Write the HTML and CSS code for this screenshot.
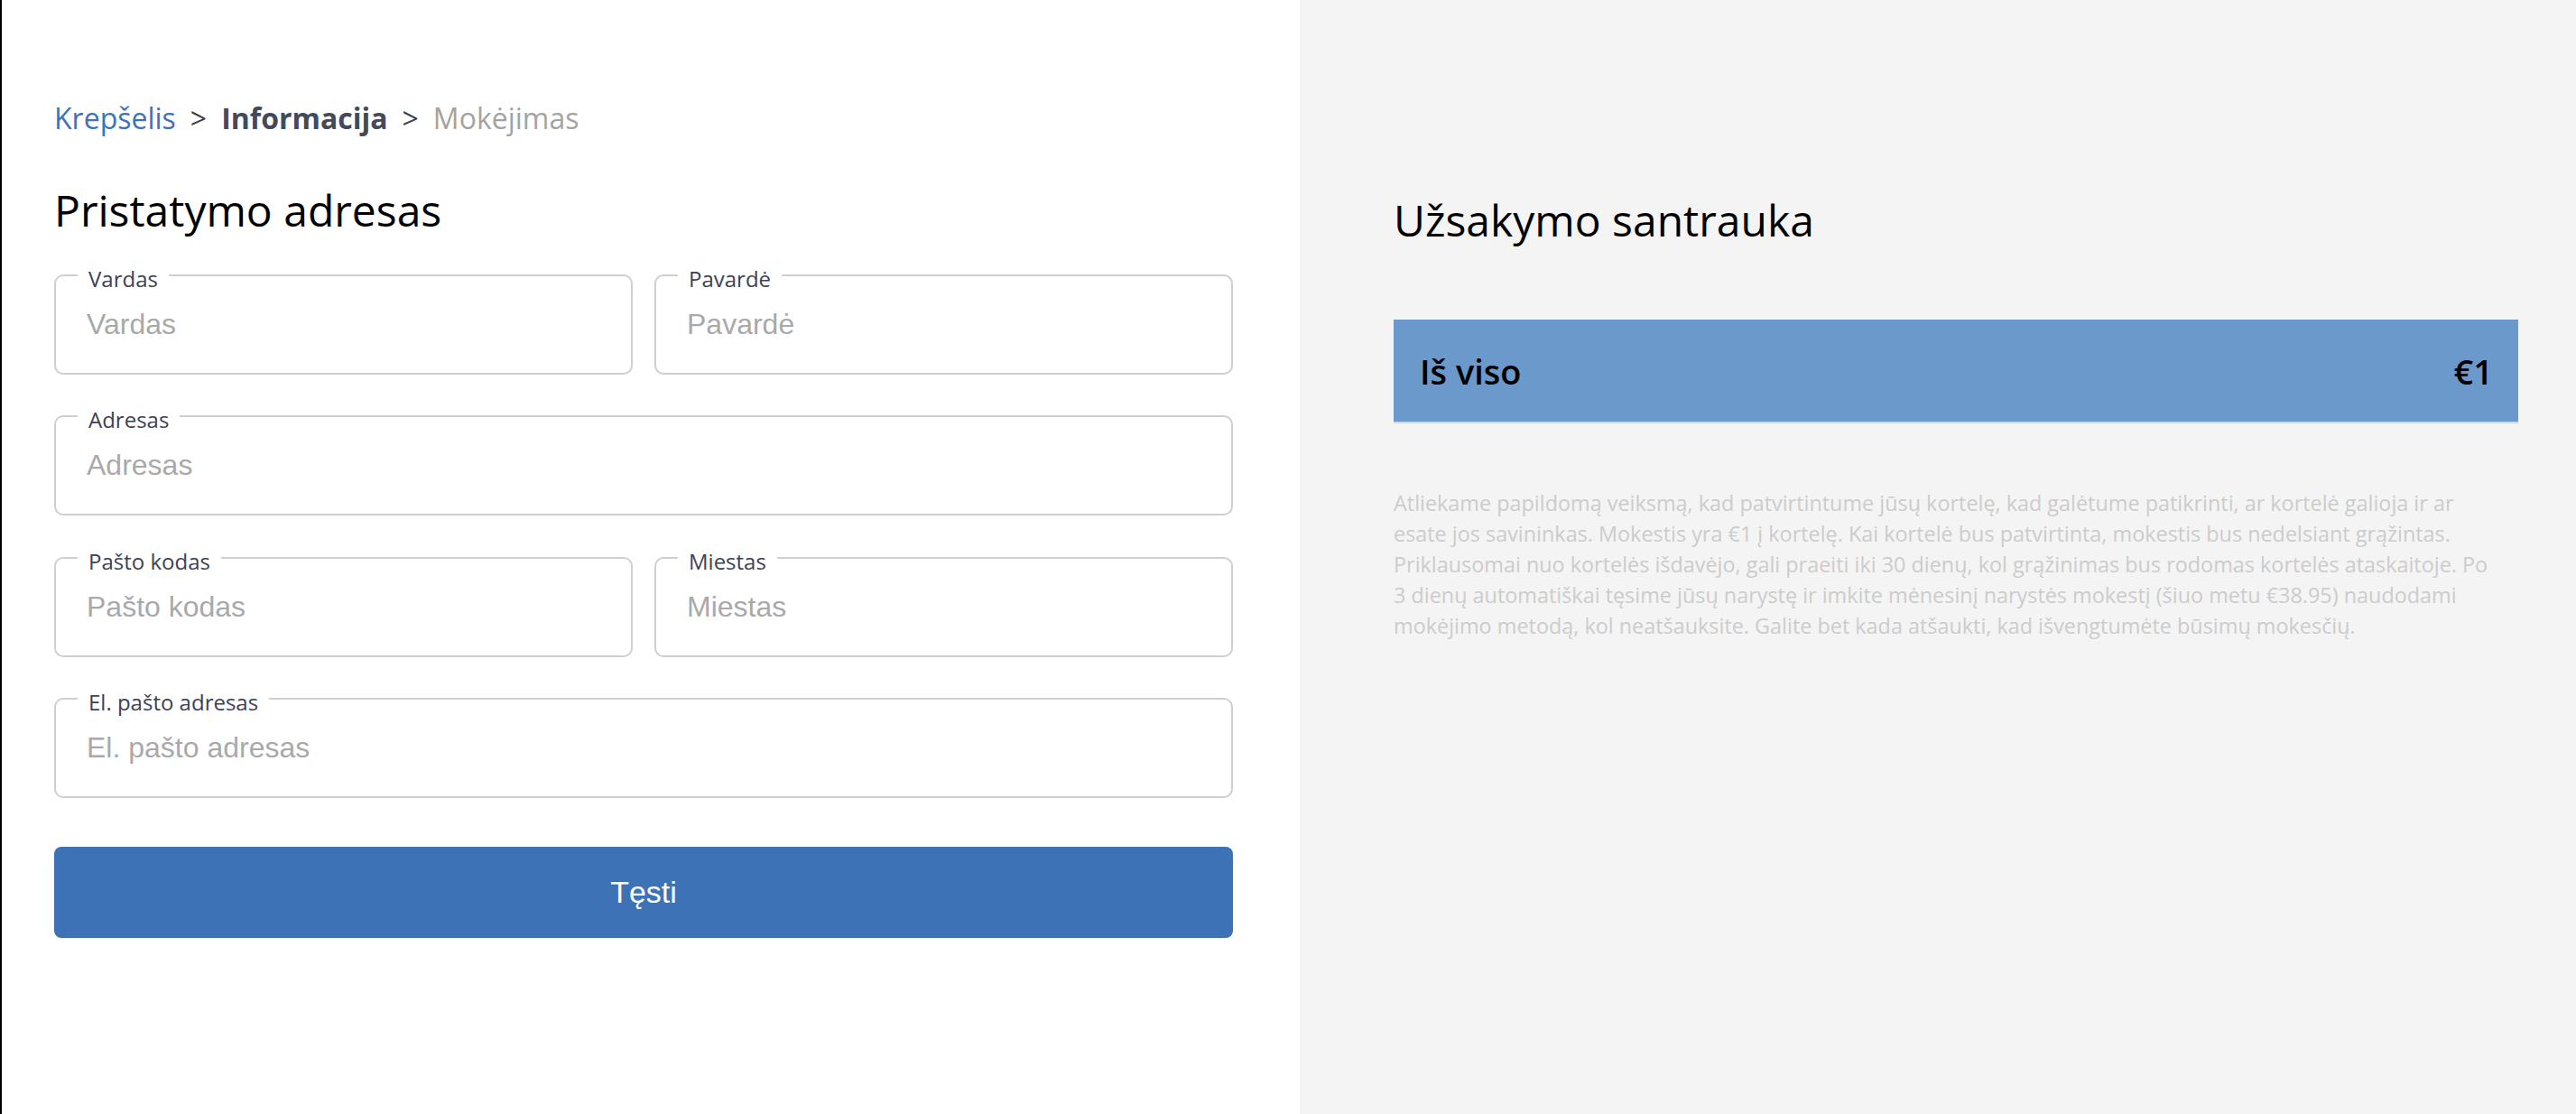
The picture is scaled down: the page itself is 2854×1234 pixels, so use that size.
FILE: index.html
```html
<!DOCTYPE html>
<html lang="lt">
<head>
<meta charset="utf-8">
<title>Informacija</title>
<link rel="stylesheet" href="styles.css">
</head>
<body>
<div class="page">
  <main class="left">
    <nav class="crumbs">
      <a class="crumb-link" href="#">Krepšelis</a>
      <span class="sep">&gt;</span>
      <span class="crumb-current">Informacija</span>
      <span class="sep">&gt;</span>
      <span class="crumb-next">Mokėjimas</span>
    </nav>
    <h1 class="title">Pristatymo adresas</h1>
    <form class="form">
      <div class="field">
        <label class="field-label">Vardas</label>
        <input class="field-input" type="text" placeholder="Vardas">
      </div>
      <div class="field">
        <label class="field-label">Pavardė</label>
        <input class="field-input" type="text" placeholder="Pavardė">
      </div>
      <div class="field wide">
        <label class="field-label">Adresas</label>
        <input class="field-input" type="text" placeholder="Adresas">
      </div>
      <div class="field">
        <label class="field-label">Pašto kodas</label>
        <input class="field-input" type="text" placeholder="Pašto kodas">
      </div>
      <div class="field">
        <label class="field-label">Miestas</label>
        <input class="field-input" type="text" placeholder="Miestas">
      </div>
      <div class="field wide">
        <label class="field-label">El. pašto adresas</label>
        <input class="field-input" type="email" placeholder="El. pašto adresas">
      </div>
    </form>
    <button class="btn" type="button">Tęsti</button>
  </main>
  <aside class="right">
    <h2 class="summary-title">Užsakymo santrauka</h2>
    <div class="total">
      <span class="total-label">Iš viso</span>
      <span class="total-value">€1</span>
    </div>
    <p class="note">Atliekame papildomą veiksmą, kad patvirtintume jūsų kortelę, kad galėtume patikrinti, ar kortelė galioja ir ar<br>esate jos savininkas. Mokestis yra €1 į kortelę. Kai kortelė bus patvirtinta, mokestis bus nedelsiant grąžintas.<br>Priklausomai nuo kortelės išdavėjo, gali praeiti iki 30 dienų, kol grąžinimas bus rodomas kortelės ataskaitoje. Po<br>3 dienų automatiškai tęsime jūsų narystę ir imkite mėnesinį narystės mokestį (šiuo metu €38.95) naudodami<br>mokėjimo metodą, kol neatšauksite. Galite bet kada atšaukti, kad išvengtumėte būsimų mokesčių.</p>
  </aside>
</div>
</body>
</html>
```

FILE: styles.css
```css
html, body {
  margin: 0;
  padding: 0;
}
body {
  font-family: "Open Sans", "Noto Sans", sans-serif;
  color: #000;
  background: #fff;
}
.page {
  display: flex;
  min-height: 100vh;
}
.left {
  box-sizing: border-box;
  width: 1440px;
  flex: none;
  border-left: 2px solid #000;
  padding: 109px 74px 0 58px;
  background: #fff;
}
.crumbs {
  display: flex;
  gap: 16px;
  font-size: 32px;
  line-height: 44px;
}
.crumb-link {
  color: #3f72b8;
  text-decoration: none;
}
.sep {
  color: #3a3f4c;
}
.crumb-current {
  font-weight: 700;
  color: #434a5b;
}
.crumb-next {
  color: #a3a3a3;
}
.title {
  margin: 50px 0 0;
  font-size: 48px;
  line-height: 60px;
  font-weight: 400;
  color: #000;
}
.form {
  margin-top: 41px;
  display: grid;
  grid-template-columns: 1fr 1fr;
  column-gap: 24px;
  row-gap: 45.33px;
}
.field {
  position: relative;
  box-sizing: border-box;
  height: 111px;
  border: 2px solid #cfcfcf;
  border-radius: 10px;
  background: #fff;
}
.field.wide {
  grid-column: 1 / span 2;
}
.field-label {
  position: absolute;
  top: -13px;
  left: 24px;
  padding: 0 12px;
  background: #fff;
  font-size: 24px;
  line-height: 32px;
  color: #3c4254;
}
.field-input {
  box-sizing: border-box;
  display: block;
  width: 100%;
  height: 100%;
  border: 0;
  outline: none;
  background: transparent;
  padding: 0 34px;
  font-family: "Liberation Sans", Arial, sans-serif;
  font-size: 32px;
  color: #333;
}
.field-input::placeholder {
  color: #a9a9a9;
}
.btn {
  display: block;
  box-sizing: border-box;
  width: 1306px;
  height: 101px;
  margin-top: 54px;
  border: 0;
  border-radius: 8px;
  background: #3e72b7;
  color: #fff;
  font-family: "Liberation Sans", Arial, sans-serif;
  font-size: 34px;
  cursor: pointer;
}
.right {
  flex: 1;
  box-sizing: border-box;
  background: #f4f4f4;
  padding: 214px 64px 0 104px;
}
.summary-title {
  margin: 0;
  font-size: 48px;
  line-height: 60px;
  font-weight: 400;
  color: #000;
}
.total {
  margin-top: 80px;
  height: 113px;
  box-sizing: content-box;
  border-bottom: 2px solid #d4d4d4;
  background: #6b99cc;
  display: flex;
  align-items: center;
  justify-content: space-between;
  padding: 0 28px 0 29px;
  font-size: 38px;
  font-weight: 600;
  color: #000;
}
.note {
  margin: 71px 0 0;
  font-size: 23.4px;
  line-height: 34px;
  white-space: nowrap;
  color: #cccccc;
}
```
